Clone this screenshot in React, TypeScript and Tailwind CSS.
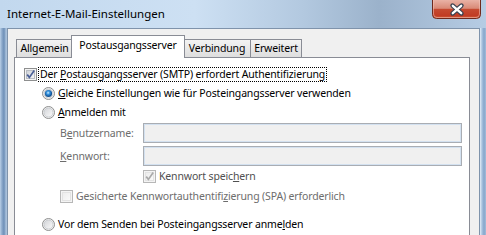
import React from 'react';

const gray = 'text-[#6d6d6d]';

function CheckBox({ checked = false, disabled = false }: { checked?: boolean; disabled?: boolean }) {
  const outer = disabled ? '#b7b7b7' : '#8e8f8f';
  const inner = disabled ? '#e3e3e3' : '#b9bdc3';
  const mark = disabled ? '#a9a9a9' : '#4a5f97';
  const id = disabled ? 'cbd' : 'cbn';
  return (
    <svg width="13" height="13" viewBox="0 0 13 13" className="shrink-0">
      <defs>
        <linearGradient id={id} x1="0" y1="0" x2="1" y2="1">
          <stop offset="0" stopColor={disabled ? '#ececec' : '#cdd1d7'} />
          <stop offset="1" stopColor={disabled ? '#fafafa' : '#f7f7f7'} />
        </linearGradient>
      </defs>
      <rect x="0.5" y="0.5" width="12" height="12" fill="#f4f4f4" stroke={outer} />
      <rect x="2.5" y="2.5" width="8" height="8" fill={`url(#${id})`} stroke={inner} />
      {checked && (
        <path d="M3.2 6.6 L5.4 9.4 L10.2 2.6" fill="none" stroke={mark} strokeWidth="1.7" />
      )}
    </svg>
  );
}

function Radio({ checked = false }: { checked?: boolean }) {
  const id = checked ? 'rdc' : 'rdn';
  return (
    <svg width="13" height="13" viewBox="0 0 13 13" className="shrink-0">
      <defs>
        <linearGradient id={id + 'b'} x1="0" y1="0" x2="1" y2="1">
          <stop offset="0" stopColor="#d2d4d8" />
          <stop offset="1" stopColor="#fbfbfb" />
        </linearGradient>
        <radialGradient id={id + 'd'} cx="0.45" cy="0.4" r="0.6">
          <stop offset="0" stopColor="#d4efff" />
          <stop offset="0.35" stopColor="#3d9ae3" />
          <stop offset="0.8" stopColor="#11569c" />
          <stop offset="1" stopColor="#194f86" />
        </radialGradient>
      </defs>
      <circle cx="6.5" cy="6.5" r="6" fill="#f2f2f2" stroke="#8e8f8f" />
      <circle cx="6.5" cy="6.5" r="4.5" fill={`url(#${id}b)`} stroke="#c2c5ca" strokeWidth="0.8" />
      {checked && <circle cx="6.5" cy="6.5" r="3.6" fill={`url(#${id}d)`} />}
    </svg>
  );
}

function CloseButton() {
  return (
    <svg width="49" height="19" viewBox="0 0 49 19" className="block">
      <defs>
        <linearGradient id="cls" x1="0" y1="0" x2="0" y2="1">
          <stop offset="0" stopColor="#e9b2a5" />
          <stop offset="0.45" stopColor="#d98a77" />
          <stop offset="0.5" stopColor="#c54a31" />
          <stop offset="0.85" stopColor="#c13c24" />
          <stop offset="1" stopColor="#d9663f" />
        </linearGradient>
      </defs>
      <path d="M0.5 0 V14.5 Q0.5 18.5 4.5 18.5 H44.5 Q48.5 18.5 48.5 14.5 V0" fill="url(#cls)" stroke="#6e2a1e" />
      <path d="M1.5 0 V14 Q1.5 17.5 5 17.5 H44 Q47.5 17.5 47.5 14 V0" fill="none" stroke="#f3c7bc" strokeOpacity="0.55" />
      <path d="M20.5 5.5 L29.5 13.5 M29.5 5.5 L20.5 13.5" stroke="#3b4250" strokeWidth="4.4" strokeLinecap="round" />
      <path d="M20.8 5.8 L29.2 13.2 M29.2 5.8 L20.8 13.2" stroke="#ffffff" strokeWidth="2.3" strokeLinecap="round" />
    </svg>
  );
}

function Tab({ label, width, selected = false, extra = '' }: { label: string; width: string; selected?: boolean; extra?: string }) {
  if (selected) {
    return (
      <div className={`relative z-10 -mx-[2px] -mb-px h-[23px] ${width} border border-b-0 border-[#898c95] bg-white flex justify-center pt-[2px] ${extra}`}>
        {label}
      </div>
    );
  }
  return (
    <div className={`h-[18px] ${width} border border-b-0 border-[#898c95] bg-gradient-to-b from-[#f3f3f3] to-[#dedede] flex justify-center pt-[1px] ${extra}`}>
      {label}
    </div>
  );
}

function TextBox() {
  return <div className="w-[319px] h-[20px] border border-[#a9adb3] bg-[#f0f0f0] shadow-[inset_0_0_0_1px_#d3e1f0]" />;
}

export default function App() {
  return (
    <div className="w-[486px] h-[235px] overflow-hidden flex flex-col bg-[#b8cfe8] font-['Noto_Sans',sans-serif] text-[10.5px] tracking-[-0.15px] leading-[15px] text-black">
      {/* title bar */}
      <div className="h-[28px] shrink-0 flex items-start bg-[linear-gradient(90deg,#c2d8ee_0%,#cde0f3_40%,#b3c9e0_62%,#9bb2cb_78%,#b6cce4_100%)]">
        <div className="pl-[7px] pt-[6px] text-[11.5px] tracking-normal leading-[16px]">Internet-E-Mail-Einstellungen</div>
        <div className="ml-auto mr-[5px]">
          <CloseButton />
        </div>
      </div>

      <div className="flex flex-1 min-h-0">
        <div className="w-[7px] shrink-0 bg-[linear-gradient(90deg,#b9cfe7_0px,#8ba8ca_2px,#6d8fb7_4px,#a8c0db_6px)]" />

        <div className="flex-1 flex flex-col bg-[#f0f0f0] border-l border-t border-r border-[#7f93ab] pt-[6px] pl-[6px] pr-[9px]">
          {/* tabs */}
          <div className="h-[22px] shrink-0 flex items-end pl-[2px]">
            <Tab label="Allgemein" width="w-[57px]" />
            <Tab label="Postausgangsserver" width="w-[114px]" selected />
            <Tab label="Verbindung" width="w-[68px]" />
            <Tab label="Erweitert" width="w-[52px]" extra="-ml-px" />
          </div>

          {/* panel */}
          <div className="flex-1 border border-[#898c95] bg-white pt-[6px] min-h-[200px]">
            <div className="h-[20px] flex items-center pl-[9px]">
              <CheckBox checked />
              <span className="ml-[1px] px-px border border-dotted border-black leading-[13px]">
                Der <u>P</u>ostausgangsserver (SMTP) erfordert Authentifizierung
              </span>
            </div>

            <div className="h-[19px] flex items-center pl-[27px] gap-[3px]">
              <Radio checked />
              <span>
                <u>G</u>leiche Einstellungen wie für Posteingangsserver verwenden
              </span>
            </div>

            <div className="h-[19px] flex items-center pl-[27px] gap-[3px]">
              <Radio />
              <span>
                <u>A</u>nmelden mit
              </span>
            </div>

            <div className="mt-[1px] h-[20px] flex items-center pl-[45px]">
              <span className={`w-[83px] ${gray}`}>
                B<u>e</u>nutzername:
              </span>
              <TextBox />
            </div>

            <div className="mt-[3px] h-[20px] flex items-center pl-[45px]">
              <span className={`w-[83px] ${gray}`}>
                <u>K</u>ennwort:
              </span>
              <TextBox />
            </div>

            <div className="mt-[1px] h-[19px] flex items-center pl-[128px] gap-[3px]">
              <CheckBox checked disabled />
              <span className="text-[#505050]">
                Kennwort speic<u>h</u>ern
              </span>
            </div>

            <div className="h-[20px] flex items-center pl-[45px] gap-[3px]">
              <CheckBox disabled />
              <span className={gray}>
                Gesicherte Kennwortauthentifi<u>z</u>ierung (SPA) erforderlich
              </span>
            </div>

            <div className="mt-[8px] h-[20px] flex items-center pl-[27px] gap-[3px]">
              <Radio />
              <span>
                Vor dem Senden bei Posteingangsserver anme<u>l</u>den
              </span>
            </div>
          </div>
        </div>

        <div className="w-[6px] shrink-0 bg-[linear-gradient(90deg,#e4edf7_0px,#a9c3df_2px,#86a6cb_4px,#a2bcda_6px)]" />
      </div>
    </div>
  );
}
